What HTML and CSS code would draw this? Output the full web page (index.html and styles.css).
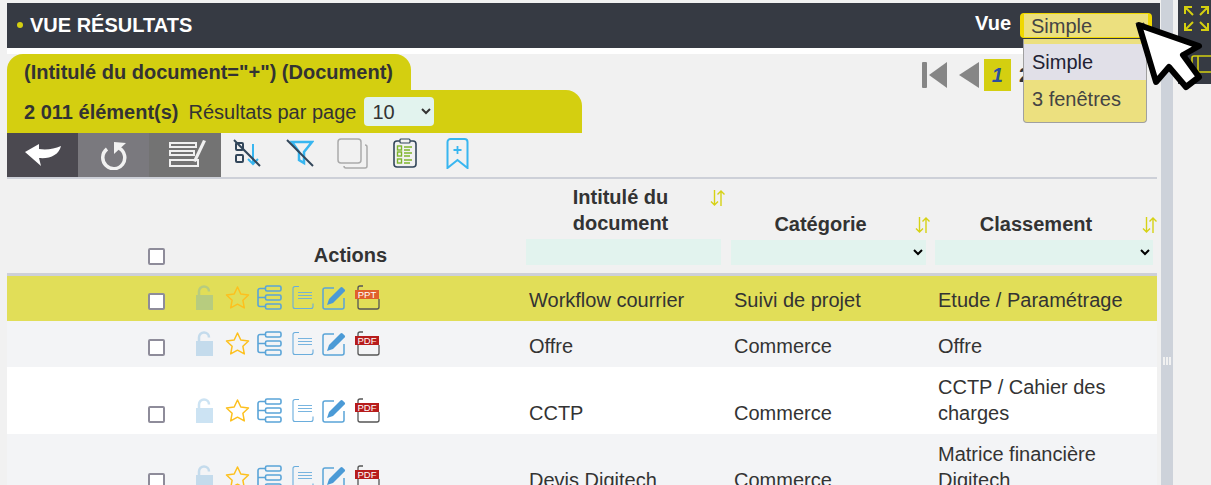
FILE: index.html
```html
<!DOCTYPE html>
<html lang="fr">
<head>
  <meta charset="UTF-8">
  <title>Vue résultats</title>
  <link rel="stylesheet" href="styles.css">
</head>
<body>
  <!-- icons shared by the rows -->
  <svg class="sprite" xmlns="http://www.w3.org/2000/svg">
    <symbol id="i-lock" viewBox="0 0 20 25">
      <path d="M5 11V6.500a5 5 0 0 1 10 0" fill="none" stroke="currentColor" stroke-width="2.500"/>
      <rect x="2" y="10" width="17" height="15" fill="currentColor"/>
    </symbol>
    <symbol id="i-star" viewBox="0 0 25 24">
      <path d="M12.500 1.500l3.300 7 7.700 1-5.600 5.300 1.400 7.600-6.800-3.700-6.800 3.700 1.400-7.600L1.500 9.500l7.700-1z" fill="none" stroke="#fdc01e" stroke-width="1.500" stroke-linejoin="round"/>
    </symbol>
    <symbol id="i-tree" viewBox="0 0 25 25">
      <g fill="none" stroke="#5aa4d8" stroke-width="1.600">
        <rect x="8.500" y="1" width="15.500" height="5" rx="1.500"/>
        <rect x="8.500" y="10" width="15.500" height="5" rx="1.500"/>
        <rect x="8.500" y="19" width="15.500" height="5" rx="1.500"/>
        <path d="M8.500 3.500H3a2 2 0 0 0-2 2v14a2 2 0 0 0 2 2h5.500M1 12.500h7.500"/>
      </g>
    </symbol>
    <symbol id="i-doc" viewBox="0 0 22 24">
      <g fill="none" stroke="#6aaddc" stroke-width="1.100">
        <path d="M7 1H3a2 2 0 0 0-2 2v18a2 2 0 0 0 2 2h16a2 2 0 0 0 2-2v-3"/>
        <path d="M6 7h14M6 10h14M6 13h14" stroke-width="0.900"/>
      </g>
    </symbol>
    <symbol id="i-edit" viewBox="0 0 25 25">
      <path d="M12 3H3a2 2 0 0 0-2 2v17a2 2 0 0 0 2 2h17a2 2 0 0 0 2-2v-9" fill="none" stroke="#5aa4d8" stroke-width="1.500"/>
      <path d="M5 20l2-6L18.500 2.500a1.500 1.500 0 0 1 2.100 0l2 2a1.500 1.500 0 0 1 0 2.100L11 18z" fill="#4b9ad6"/>
    </symbol>
    <symbol id="i-sheet" viewBox="0 0 25 25">
      <path d="M8 1H5a2 2 0 0 0-2 2v19a2 2 0 0 0 2 2h17a2 2 0 0 0 2-2V14" fill="none" stroke="#555" stroke-width="1.300"/>
    </symbol>
  </svg>

  <div class="app">
    <div class="main">
      <header class="topbar">
        <h1 class="title"><span class="dot"></span>VUE RÉSULTATS</h1>
        <div class="view-pick">
          <label class="view-label" for="view">Vue</label>
          <select id="view" class="view-select">
            <option>Simple</option>
            <option>3 fenêtres</option>
          </select>
        </div>
      </header>

      <div class="tabs-row">
        <div class="tabs">
          <div class="tab-query">(Intitulé du document="+") (Document)</div>
          <div class="tab-count">
            <b>2 011 élément(s)</b>
            <span>Résultats par page</span>
            <select class="page-size"><option>10</option></select>
          </div>
        </div>
        <div class="pager">
          <svg class="pg-first" width="25" height="26" viewBox="0 0 25 26"><rect x="0" y="0" width="5" height="26" rx="1" fill="#868686"/><path d="M25 0v26L7 13z" fill="#868686"/></svg>
          <svg class="pg-prev" width="20" height="26" viewBox="0 0 20 26"><path d="M20 0v26L0 13z" fill="#868686"/></svg>
          <span class="pg-current">1</span>
          <span class="pg-num">2</span>
        </div>
      </div>

      <div class="toolbar">
        <button class="tb-btn tb-back" type="button">
          <svg width="38" height="24" viewBox="0 0 38 24"><path d="M1 9L15 1v5c8 1 15 0 22-3-2 9-11 13-22 12l2 8z" fill="#fff"/></svg>
        </button>
        <button class="tb-btn tb-reset" type="button">
          <svg width="28" height="29" viewBox="0 0 28 29"><path d="M7 8a11 11 0 1 0 12-1" fill="none" stroke="#f2f2f2" stroke-width="3.500"/><path d="M14 1v12l12-11z" fill="#f2f2f2"/></svg>
        </button>
        <button class="tb-btn tb-list" type="button">
          <svg width="37" height="28" viewBox="0 0 37 28"><g fill="none" stroke="#f0f0f0" stroke-width="2"><path d="M1 4h26v4H1zM1 12h24v4H1zM1 21h28v6H1z"/></g><path d="M24 22L34 1l3 1-10 21z" fill="#f0f0f0"/></svg>
        </button>
        <div class="tb-icons">
          <svg width="28" height="28" viewBox="0 0 28 28"><g fill="none" stroke="#32465a" stroke-width="2"><rect x="3" y="4" width="7" height="7" rx="1"/><rect x="3" y="16" width="7" height="7" rx="1"/></g><path d="M20 5v20M15 20l5 5 5-5" fill="none" stroke="#38b6f0" stroke-width="2"/><path d="M1 1l26 26" stroke="#32465a" stroke-width="2"/></svg>
          <svg width="28" height="28" viewBox="0 0 28 28"><path d="M6 3h20l-8 10v11l-5-3v-8z" fill="none" stroke="#38b6f0" stroke-width="2.500"/><path d="M1 1l26 26" stroke="#32465a" stroke-width="2"/></svg>
          <svg class="tb-copy" width="31" height="31" viewBox="0 0 31 31"><rect x="1" y="1" width="23" height="24" rx="3" fill="none" stroke="#aaa" stroke-width="1.500"/><path d="M28 7a2 2 0 0 1 2 2v19a2 2 0 0 1-2 2H9a2 2 0 0 1-2-2" fill="none" stroke="#aaa" stroke-width="1.500"/></svg>
          <svg width="24" height="30" viewBox="0 0 24 30"><rect x="1" y="3" width="22" height="26" rx="3" fill="none" stroke="#32465a" stroke-width="1.600"/><rect x="7" y="1" width="10" height="4" rx="1" fill="#f1f1f1" stroke="#32465a" stroke-width="1.200"/><g fill="none" stroke="#7db52c" stroke-width="1.400"><rect x="4.500" y="8" width="4" height="4"/><rect x="4.500" y="14" width="4" height="4"/><rect x="4.500" y="21" width="4" height="4"/><path d="M11 9h8M11 12h6M11 15h8M11 18h6M11 22h8M11 25h6"/></g></svg>
          <svg class="tb-mark" width="23" height="31" viewBox="0 0 23 31"><path d="M1.500 30V4a3 3 0 0 1 3-3h14a3 3 0 0 1 3 3v26l-10-8z" fill="none" stroke="#38b6f0" stroke-width="2"/><path d="M11.500 8v8M7.500 12h8" stroke="#38b6f0" stroke-width="1.800"/></svg>
        </div>
      </div>

      <table class="results">
        <colgroup>
          <col class="c-check"><col class="c-actions"><col class="c-name"><col class="c-cat"><col class="c-rank">
        </colgroup>
        <thead>
          <tr>
            <th class="cell-check"><span class="check"></span></th>
            <th class="head-actions">Actions</th>
            <th class="head-name">
              <div class="head-title">
                <span class="head-text">Intitulé du document</span>
                <svg class="sort" width="16" height="18" viewBox="0 0 16 18"><path d="M4.500 1v15M1 12.500L4.500 16 8 12.500M11 17V2M7.500 5.500L11 2l3.500 3.500" fill="none" stroke="#d6d215" stroke-width="1.400"/></svg>
              </div>
              <input class="filter" type="text">
            </th>
            <th class="head-cat">
              <div class="head-title">
                <span class="head-text">Catégorie</span>
                <svg class="sort" width="16" height="18" viewBox="0 0 16 18"><path d="M4.500 1v15M1 12.500L4.500 16 8 12.500M11 17V2M7.500 5.500L11 2l3.500 3.500" fill="none" stroke="#d6d215" stroke-width="1.400"/></svg>
              </div>
              <select class="filter"><option></option></select>
            </th>
            <th>
              <div class="head-title">
                <span class="head-text">Classement</span>
                <svg class="sort" width="16" height="18" viewBox="0 0 16 18"><path d="M4.500 1v15M1 12.500L4.500 16 8 12.500M11 17V2M7.500 5.500L11 2l3.500 3.500" fill="none" stroke="#d6d215" stroke-width="1.400"/></svg>
              </div>
              <select class="filter"><option></option></select>
            </th>
          </tr>
        </thead>
        <tbody>
          <tr class="row-on">
            <td class="cell-check"><span class="check"></span></td>
            <td>
              <div class="acts">
                <svg class="a-lock"><use href="#i-lock"/></svg>
                <svg class="a-star"><use href="#i-star"/></svg>
                <svg class="a-tree"><use href="#i-tree"/></svg>
                <svg class="a-doc"><use href="#i-doc"/></svg>
                <svg class="a-edit"><use href="#i-edit"/></svg>
                <svg class="a-file" viewBox="0 0 25 25"><use href="#i-sheet"/><rect x="0" y="5" width="24" height="9" fill="#e0602c"/><text class="badge" x="12" y="12.800">PPT</text></svg>
              </div>
            </td>
            <td>Workflow courrier</td>
            <td>Suivi de projet</td>
            <td>Etude / Paramétrage</td>
          </tr>
          <tr class="row-alt row-two">
            <td class="cell-check"><span class="check"></span></td>
            <td>
              <div class="acts">
                <svg class="a-lock"><use href="#i-lock"/></svg>
                <svg class="a-star"><use href="#i-star"/></svg>
                <svg class="a-tree"><use href="#i-tree"/></svg>
                <svg class="a-doc"><use href="#i-doc"/></svg>
                <svg class="a-edit"><use href="#i-edit"/></svg>
                <svg class="a-file" viewBox="0 0 25 25"><use href="#i-sheet"/><rect x="0" y="5" width="24" height="9" fill="#b71c1c"/><text class="badge" x="12" y="12.800">PDF</text></svg>
              </div>
            </td>
            <td>Offre</td>
            <td>Commerce</td>
            <td>Offre</td>
          </tr>
          <tr class="row-plain">
            <td class="cell-check"><span class="check"></span></td>
            <td>
              <div class="acts">
                <svg class="a-lock"><use href="#i-lock"/></svg>
                <svg class="a-star"><use href="#i-star"/></svg>
                <svg class="a-tree"><use href="#i-tree"/></svg>
                <svg class="a-doc"><use href="#i-doc"/></svg>
                <svg class="a-edit"><use href="#i-edit"/></svg>
                <svg class="a-file" viewBox="0 0 25 25"><use href="#i-sheet"/><rect x="0" y="5" width="24" height="9" fill="#b71c1c"/><text class="badge" x="12" y="12.800">PDF</text></svg>
              </div>
            </td>
            <td>CCTP</td>
            <td>Commerce</td>
            <td>CCTP / Cahier des charges</td>
          </tr>
          <tr class="row-alt">
            <td class="cell-check"><span class="check"></span></td>
            <td>
              <div class="acts">
                <svg class="a-lock"><use href="#i-lock"/></svg>
                <svg class="a-star"><use href="#i-star"/></svg>
                <svg class="a-tree"><use href="#i-tree"/></svg>
                <svg class="a-doc"><use href="#i-doc"/></svg>
                <svg class="a-edit"><use href="#i-edit"/></svg>
                <svg class="a-file" viewBox="0 0 25 25"><use href="#i-sheet"/><rect x="0" y="5" width="24" height="9" fill="#b71c1c"/><text class="badge" x="12" y="12.800">PDF</text></svg>
              </div>
            </td>
            <td>Devis Digitech</td>
            <td>Commerce</td>
            <td>Matrice financière Digitech</td>
          </tr>
        </tbody>
      </table>
    </div>

    <div class="splitter"><span class="grip"></span></div>

    <aside class="side">
      <div class="side-tools">
        <svg width="25" height="25" viewBox="0 0 25 25"><g fill="none" stroke="#d4cf10" stroke-width="2"><path d="M1 8V1h7M1 1l8 8M17 1h7v7M24 1l-8 8M1 17v7h7M1 24l8-8M24 17v7h-7M24 24l-8-8"/></g></svg>
        <svg class="side-panel" width="20" height="18" viewBox="0 0 20 18"><rect x="1" y="1" width="30" height="16" rx="2" fill="none" stroke="#d4cf10" stroke-width="1.600"/><path d="M7 1v16" stroke="#d4cf10" stroke-width="1.600"/></svg>
      </div>
    </aside>
  </div>

  <!-- open list of the Vue select -->
  <ul class="view-menu">
    <li class="view-opt view-opt-on">Simple</li>
    <li class="view-opt">3 fenêtres</li>
  </ul>

  <svg class="cursor" width="80" height="80" viewBox="0 0 80 80"><path d="M8 8l17 57 13-15 17 20 13-10-16-22 16-9z" fill="#fff" stroke="#000" stroke-width="6" stroke-linejoin="round"/></svg>
</body>
</html>
```

FILE: styles.css
```css
html, body {
  height: 485px;
  overflow: hidden;
}

body {
  margin: 0;
  font-family: "Liberation Sans", Arial, sans-serif;
  font-size: 20px;
  line-height: 26px;
  color: #333;
  background-color: #f1f1f1;
}

.sprite {
  display: none;
}

.app {
  display: flex;
  height: 485px;
}

.main {
  width: 1150px;
  margin-left: 7px;
  margin-right: 4px;
  padding-top: 3px;
  flex: none;
}

/* top bar */
.topbar {
  display: flex;
  justify-content: space-between;
  align-items: flex-start;
  height: 45px;
  margin-right: -3px;
  padding: 10px 8px 0 10px;
  box-sizing: border-box;
  background-color: #363a43;
  box-shadow: 0 6px 0 #fff;
}

.title {
  display: flex;
  align-items: center;
  margin: 0;
  font-size: 20px;
  line-height: 24px;
  color: #fff;
}

.dot {
  width: 6px;
  height: 6px;
  margin-right: 7px;
  border-radius: 50%;
  background-color: #d4cf10;
}

.view-pick {
  display: flex;
  align-items: flex-start;
  gap: 9px;
}

.view-label {
  font-weight: bold;
  color: #fff;
  line-height: 20px;
}

.view-select {
  width: 132px;
  height: 25px;
  padding: 0 0 0 3px;
  font: 20px "Liberation Sans", Arial, sans-serif;
  color: #444;
  background-color: #ece07f;
  border: solid #f0d800;
  border-width: 1px 4px;
  border-radius: 4px;
}

/* tabs and pager */
.tabs-row {
  display: flex;
  justify-content: space-between;
  margin-top: 6px;
}

.tabs {
  flex: none;
}

.tab-query {
  width: 404px;
  height: 36px;
  padding: 5px 0 0 17px;
  box-sizing: border-box;
  font-weight: bold;
  background-color: #d4cf10;
  border-radius: 16px 16px 0 0;
}

.tab-count {
  display: flex;
  align-items: center;
  gap: 10px;
  width: 575px;
  height: 43px;
  padding-left: 17px;
  box-sizing: border-box;
  background-color: #d4cf10;
  border-radius: 0 16px 0 0;
}

.page-size {
  width: 70px;
  height: 29px;
  margin-left: -2px;
  padding-left: 4px;
  font: 20px "Liberation Sans", Arial, sans-serif;
  color: #333;
  background-color: #e2f3ee;
  border: none;
  border-radius: 4px;
}

.pager {
  display: flex;
  align-items: center;
  height: 32px;
  margin-top: 5px;
  margin-right: 127px;
}

.pg-first {
  margin-right: 12px;
}

.pg-prev {
  margin-right: 5px;
}

.pg-current {
  width: 27px;
  height: 32px;
  font-weight: bold;
  font-style: italic;
  line-height: 32px;
  text-align: center;
  color: #2b4f9e;
  background-color: #d4cf10;
}

.pg-num {
  margin-left: 8px;
  font-weight: bold;
}

/* toolbar */
.toolbar {
  display: flex;
  height: 46px;
  border-bottom: 2px solid #cdd0d8;
  box-sizing: border-box;
}

.tb-btn {
  display: flex;
  align-items: center;
  justify-content: center;
  width: 71px;
  height: 44px;
  padding: 0;
  border: none;
}

.tb-back {
  background-color: #4b4950;
}

.tb-reset {
  background-color: #7a797e;
}

.tb-list {
  width: 72px;
  background-color: #737373;
}

.tb-list svg {
  margin: -5px 0 0 5px;
}

.tb-icons {
  display: flex;
  align-items: center;
  gap: 25px;
  padding: 0 0 4px 12px;
}

.tb-copy {
  margin-left: -2px;
}

.tb-mark {
  margin-left: 4px;
}

/* results table */
.results {
  width: 1150px;
  table-layout: fixed;
  border-collapse: collapse;
}

.c-check {
  width: 178px;
}

.c-actions {
  width: 337px;
}

.c-name {
  width: 205px;
}

.c-cat {
  width: 204px;
}

.results thead tr {
  height: 95px;
  border-bottom: 3px solid #cdd0d8;
}

.results th {
  padding: 4px 4px 8px;
  vertical-align: bottom;
  font-size: 20px;
}

.results th.head-actions {
  padding-right: 10px;
  padding-bottom: 5px;
}

.results th.head-name {
  padding-right: 6px;
}

.results th.head-cat {
  padding-right: 5px;
}

.head-title {
  display: flex;
  align-items: center;
  margin-bottom: 3px;
}

.head-text {
  flex: 1;
  padding-right: 5px;
  text-align: center;
}

.head-name .head-text {
  padding: 0 0 0 5px;
}

.sort {
  flex: none;
  align-self: flex-start;
  margin-top: 5px;
  margin-right: -5px;
}

.filter {
  display: block;
  width: 100%;
  height: 25px;
  padding: 0;
  box-sizing: border-box;
  background-color: #e2f3ee;
  border: none;
}

input.filter {
  height: 26px;
}

.results td {
  padding: 7px 4px 8px 7px;
  vertical-align: bottom;
}

.row-on {
  height: 47px;
  background-color: #e1de58;
}

.row-two {
  height: 46px;
}

.row-alt {
  background-color: #f3f4f6;
}

.row-plain {
  background-color: #fff;
}

.results .cell-check {
  padding-left: 0;
  padding-right: 20px;
  text-align: right;
}

.check {
  display: block;
  width: 13px;
  height: 13px;
  margin: 0 0 3px auto;
  background-color: #fff;
  border: 2px solid #8e8c9a;
  border-radius: 2px;
}

th .check {
  margin-bottom: 0;
}

.acts {
  display: flex;
  margin-bottom: 3px;
  margin-left: 2px;
  height: 25px;
}

.acts svg {
  flex: none;
  height: 25px;
}

.a-lock {
  width: 20px;
  margin-right: 11px;
  color: #5aa4d8;
  opacity: 0.3;
}

.a-star {
  width: 25px;
  margin-right: 7px;
}

.a-tree {
  width: 25px;
  margin-right: 10px;
}

.a-doc {
  width: 22px;
  margin-right: 8px;
}

.a-edit {
  width: 25px;
  margin-right: 8px;
}

.a-file {
  width: 25px;
}

.badge {
  font: 9.500px "Liberation Sans", Arial, sans-serif;
  text-anchor: middle;
  fill: #fff;
}

/* splitter and side panel */
.splitter {
  flex: none;
  width: 12px;
  height: 485px;
  padding-top: 357px;
  box-sizing: border-box;
  background-color: #cdd2da;
}

.grip {
  display: block;
  width: 8px;
  height: 8px;
  margin: 0 auto;
  background: repeating-linear-gradient(90deg, #f1f1f1 0 2px, transparent 2px 3px);
}

.side {
  flex: 1;
  padding-left: 5px;
}

.side-tools {
  display: flex;
  flex-direction: column;
  align-items: flex-end;
  height: 84px;
  padding: 6px 2px 0 0;
  box-sizing: border-box;
  background-color: #363a43;
}

.side-panel {
  margin-top: 24px;
  margin-right: -2px;
}

/* overlays */
.view-menu {
  position: absolute;
  top: 39px;
  left: 1023px;
  width: 122px;
  margin: 0;
  padding: 5px 0 0;
  list-style: none;
  color: #444;
  background-color: #ece07f;
  border: 1px solid #a0a0a0;
  border-top: none;
  border-radius: 0 0 4px 4px;
}

.view-opt {
  height: 36px;
  padding: 5px 8px 0;
  box-sizing: border-box;
}

.view-opt + .view-opt {
  height: 42px;
  padding-top: 6px;
}

.view-opt-on {
  color: #223;
  background-color: #e1e0e8;
}

.cursor {
  position: absolute;
  top: 17px;
  left: 1131px;
}
```
